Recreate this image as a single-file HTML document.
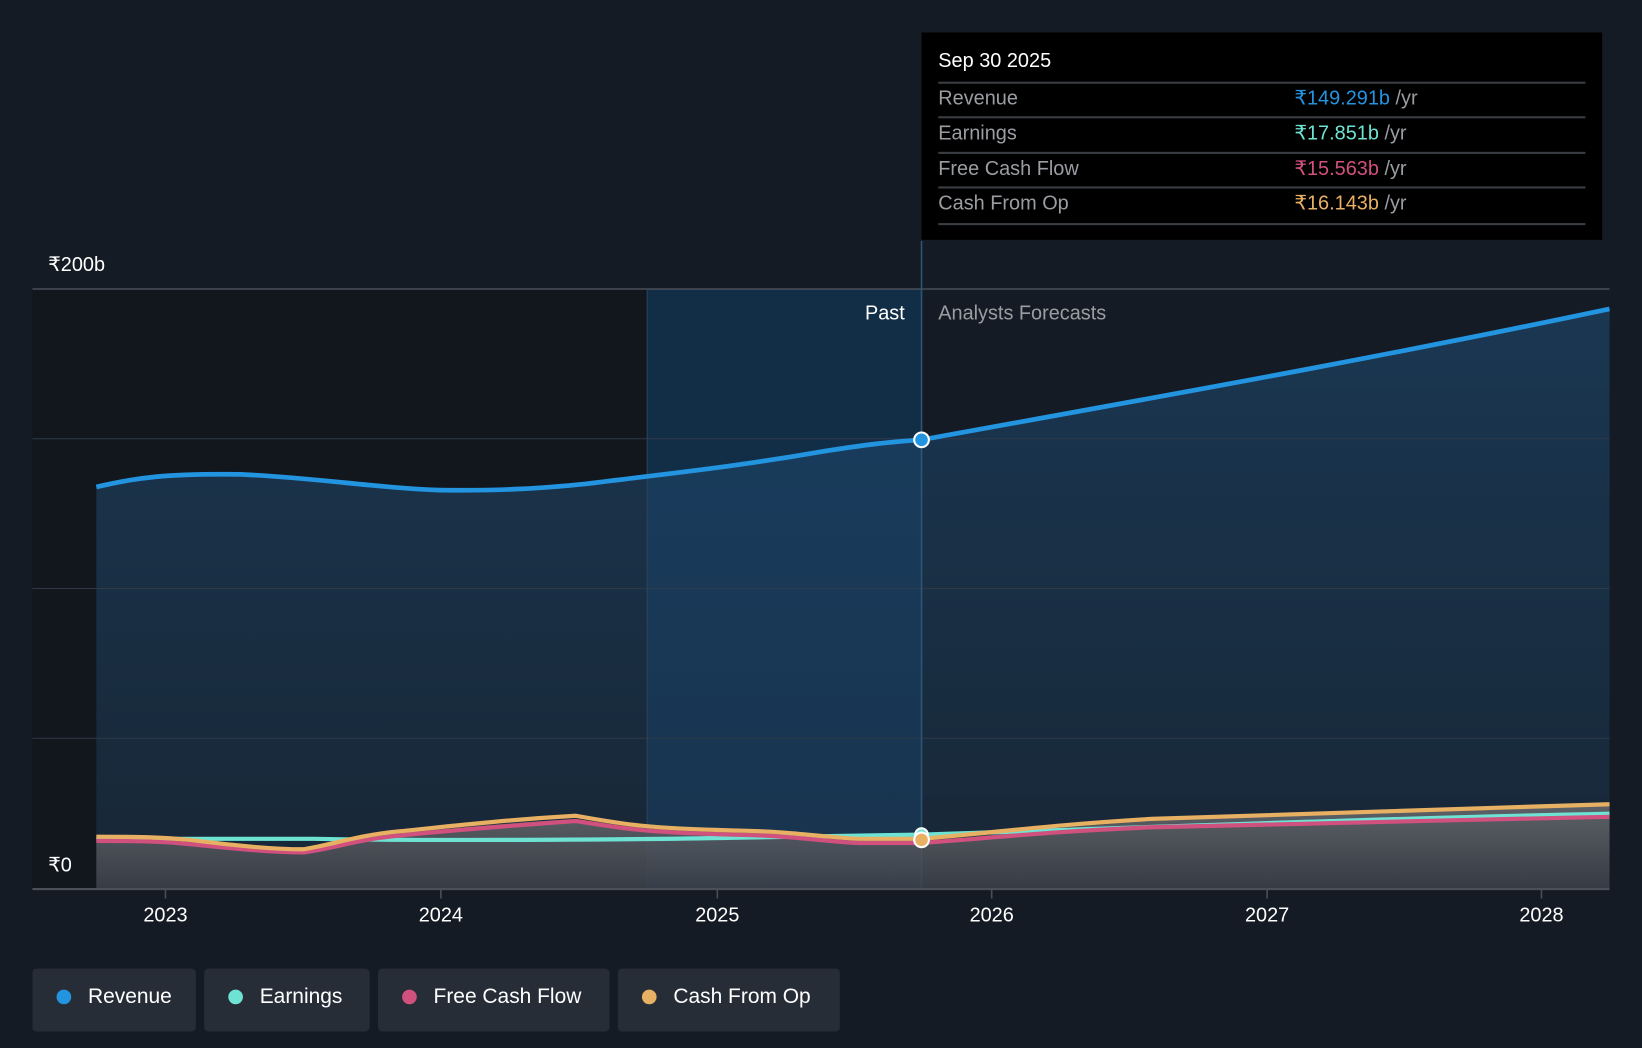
<!DOCTYPE html>
<html><head><meta charset="utf-8"><style>
html,body{margin:0;padding:0;background:#151b24;overflow:hidden;}
#w{width:1568px;height:1001px;transform:scale(1.04719);transform-origin:0 0;position:relative;font-family:"Liberation Sans",sans-serif;}
.tt{position:absolute;left:880px;top:31px;width:650px;height:198px;background:#000;}
.tt .h{position:absolute;left:16px;top:17px;color:#fff;font-size:19px;}
.row{position:absolute;left:16px;width:618px;height:33px;border-top:2px solid #3a3d42;color:#9a9da2;font-size:19px;line-height:30px;}
.row span{position:absolute;left:340px;}
.row i{font-style:normal;color:#9a9da2;}
.leg{position:absolute;top:925px;height:60px;background:#272d37;border-radius:4px;color:#fff;font-size:20px;line-height:54px;}
.leg b{position:absolute;left:23px;top:20px;width:14px;height:14px;border-radius:50%;}
.leg span{position:absolute;left:53px;}
</style></head><body><div id="w">
<svg width="1568" height="1001" style="position:absolute;left:0;top:0">
<defs>
<linearGradient id="rf" x1="0" y1="0" x2="0" y2="1"><stop offset="0" stop-color="#1c3c5a" stop-opacity=".85"/><stop offset="1" stop-color="#182838" stop-opacity=".9"/></linearGradient>
<linearGradient id="bf" x1="0" y1="0" x2="0" y2="1"><stop offset="0" stop-color="#6a6c70"/><stop offset="1" stop-color="#3c4048"/></linearGradient>
</defs>
<rect x="31" y="276" width="587" height="572" fill="#12161d"/>
<rect x="618" y="276" width="262" height="572" fill="#0f1e2b"/>
<path d="M92,465 C130,456 160,452 230,453 C300,456 360,466 420,468 C480,469 520,466 560,462 C640,452 700,446 780,432 C830,424 850,422 880,420 C1100,380 1300,345 1537,295 L1537,848 L92,848 Z" fill="url(#rf)"/>
<rect x="618" y="276" width="262" height="572" fill="#1a4a78" opacity=".35"/>
<g stroke="#2e3a48" stroke-width="1"><line x1="31" y1="419" x2="1537" y2="419"/><line x1="31" y1="562" x2="1537" y2="562"/><line x1="31" y1="705" x2="1537" y2="705"/></g>
<line x1="31" y1="276" x2="1537" y2="276" stroke="#4a4f58" stroke-width="1.5"/>
<line x1="618" y1="276" x2="618" y2="848" stroke="#2b4458" stroke-width="1"/>
<line x1="880" y1="230" x2="880" y2="848" stroke="#2d5576" stroke-width="1.5"/>
<path d="M92,802 C130,802 150,803 170,804 C220,810 260,814 290,813 C320,808 340,800 380,796 C430,791 480,786 550,782 C600,790 620,793 700,795 C760,796 790,802 820,803 L880,803 C950,798 1000,790 1100,784 C1300,776 1400,772 1537,768 L1537,848 L92,848 Z" fill="url(#bf)" opacity=".85"/>
<path d="M92,801 L300,801 C400,803 600,802 700,800 L880,797 C1100,790 1300,782 1537,777" fill="none" stroke="#6ee3d4" stroke-width="4"/>
<path d="M92,803 C140,803 160,804 180,806 C230,811 260,814 290,814 C320,810 340,802 380,798 C430,793 480,789 550,784 C600,792 620,795 700,797 C760,798 790,804 820,805 L880,805 C950,800 1000,794 1100,790 C1300,785 1400,783 1537,780" fill="none" stroke="#d0507e" stroke-width="4"/>
<path d="M92,799 C140,799 160,800 180,802 C230,808 260,811 290,811 C320,806 340,798 380,794 C430,789 480,783 550,779 C600,788 620,791 700,793 C760,794 790,800 820,801 L880,801 C950,795 1000,788 1100,782 C1300,776 1400,772 1537,768" fill="none" stroke="#e8b062" stroke-width="4"/>
<path d="M92,465 C130,456 160,452 230,453 C300,456 360,466 420,468 C480,469 520,466 560,462 C640,452 700,446 780,432 C830,424 850,422 880,420 C1100,380 1300,345 1537,295" fill="none" stroke="#2394e0" stroke-width="4.5"/>
<circle cx="880" cy="420" r="7" fill="#2394e0" stroke="#fff" stroke-width="2"/>
<circle cx="880" cy="797" r="6" fill="#6ee3d4" stroke="#fff" stroke-width="2"/>
<circle cx="880" cy="802" r="7" fill="#e8b062" stroke="#fff" stroke-width="2"/>
<line x1="31" y1="849" x2="1537" y2="849" stroke="#4a4f58" stroke-width="2"/>
<g stroke="#4a4f58" stroke-width="1.5"><line x1="158" y1="849" x2="158" y2="858"/><line x1="421" y1="849" x2="421" y2="858"/><line x1="685" y1="849" x2="685" y2="858"/><line x1="947" y1="849" x2="947" y2="858"/><line x1="1210" y1="849" x2="1210" y2="858"/><line x1="1472" y1="849" x2="1472" y2="858"/></g>
<g fill="#fff" font-family="Liberation Sans,sans-serif" font-size="19" text-anchor="middle"><text x="158" y="880">2023</text><text x="421" y="880">2024</text><text x="685" y="880">2025</text><text x="947" y="880">2026</text><text x="1210" y="880">2027</text><text x="1472" y="880">2028</text></g>
<text x="46" y="259" fill="#fff" font-size="19" font-family="Liberation Sans,sans-serif">₹200b</text>
<text x="46" y="832" fill="#fff" font-size="19" font-family="Liberation Sans,sans-serif">₹0</text>
<text x="864" y="305" fill="#fff" font-size="19" text-anchor="end" font-family="Liberation Sans,sans-serif">Past</text>
<text x="896" y="305" fill="#9a9da2" font-size="19" font-family="Liberation Sans,sans-serif">Analysts Forecasts</text>
</svg>
<div class="tt"><div class="h">Sep 30 2025</div>
<div class="row" style="top:47px">Revenue<span><em style="font-style:normal;color:#2394e0">₹149.291b</em> <i>/yr</i></span></div>
<div class="row" style="top:80px">Earnings<span><em style="font-style:normal;color:#6ee3d4">₹17.851b</em> <i>/yr</i></span></div>
<div class="row" style="top:114px">Free Cash Flow<span><em style="font-style:normal;color:#d0507e">₹15.563b</em> <i>/yr</i></span></div>
<div class="row" style="top:147px;height:33px;border-bottom:2px solid #3a3d42">Cash From Op<span><em style="font-style:normal;color:#e8b062">₹16.143b</em> <i>/yr</i></span></div>
</div>
<div class="leg" style="left:31px;width:156px"><b style="background:#2394e0"></b><span>Revenue</span></div>
<div class="leg" style="left:195px;width:158px"><b style="background:#6ee3d4"></b><span>Earnings</span></div>
<div class="leg" style="left:361px;width:221px"><b style="background:#d0507e"></b><span>Free Cash Flow</span></div>
<div class="leg" style="left:590px;width:212px"><b style="background:#e8b062"></b><span>Cash From Op</span></div>
</div></body></html>
